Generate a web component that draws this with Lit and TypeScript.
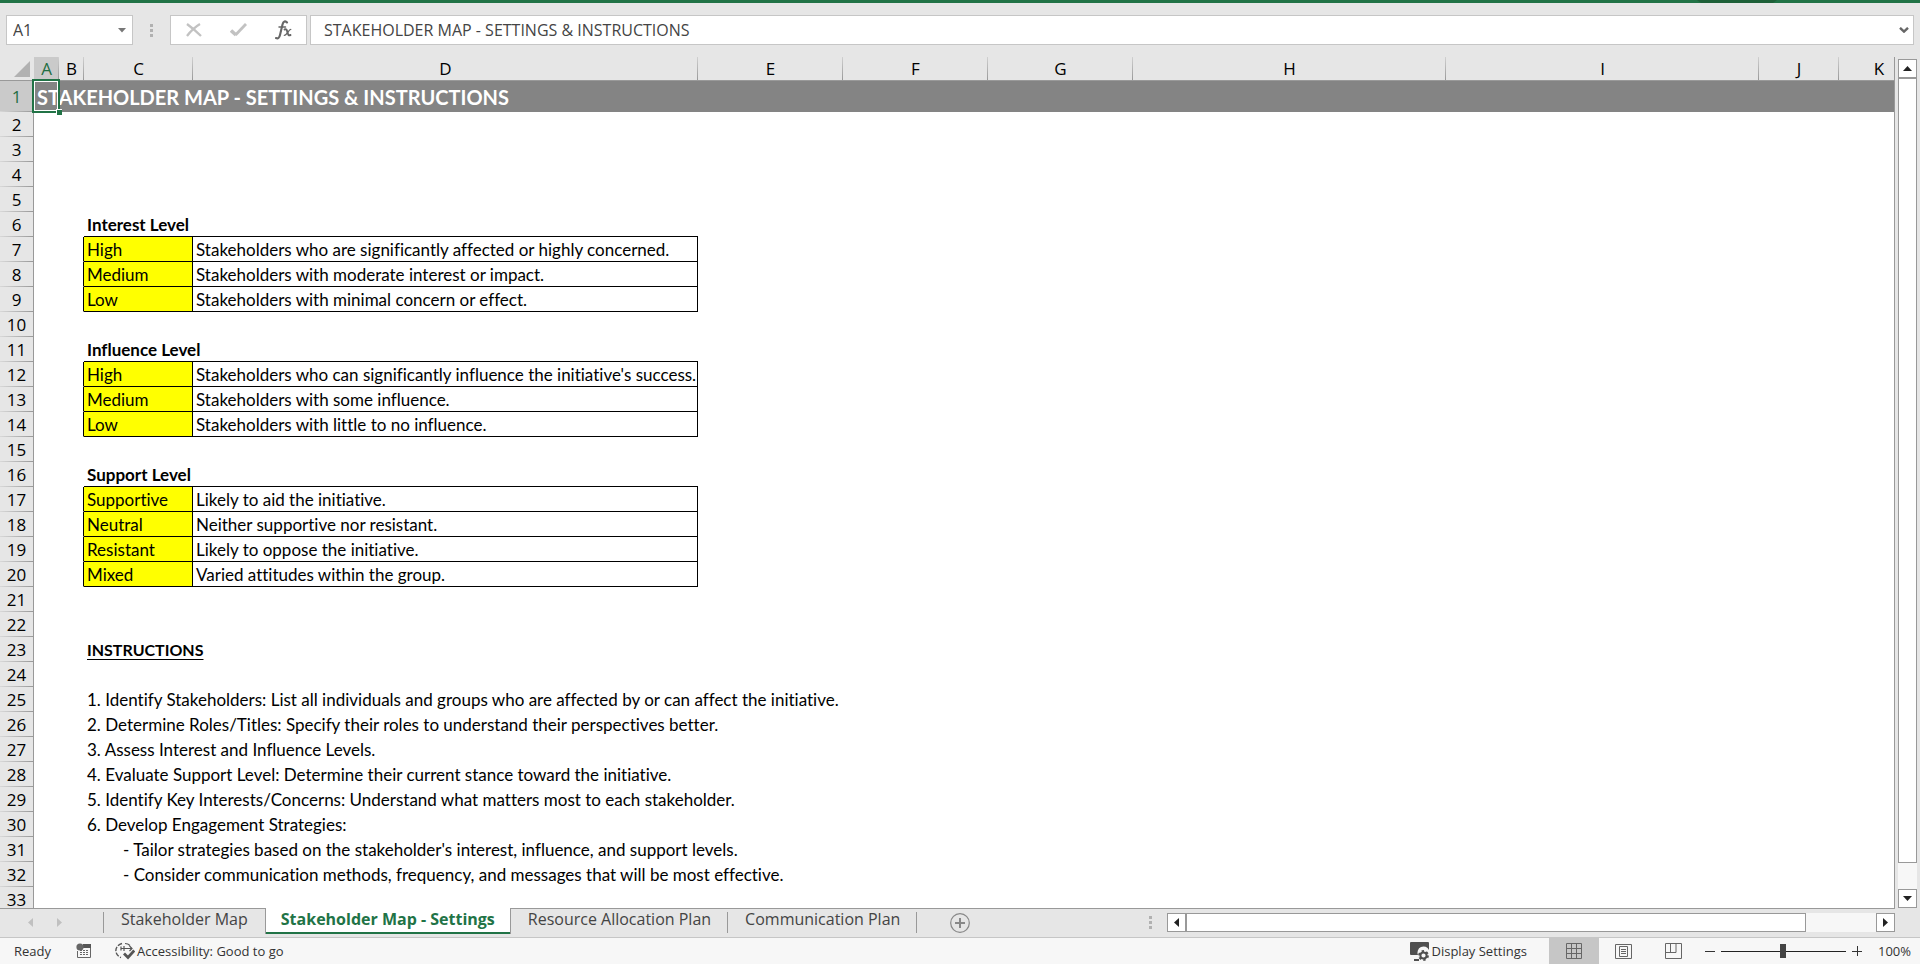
import { LitElement, html, css, nothing } from "lit";
import { customElement, property, state } from "lit/decorators.js";
import { classMap } from "lit/directives/class-map.js";

const COLUMNS = ["A", "B", "C", "D", "E", "F", "G", "H", "I", "J", "K"];
const ROW_COUNT = 33;

interface Level {
  row: number;
  name: string;
  text: string;
}

const HEADINGS: Record<number, string> = {
  6: "Interest Level",
  11: "Influence Level",
  16: "Support Level",
  23: "INSTRUCTIONS",
};

const LEVELS: Level[] = [
  { row: 7, name: "High", text: "Stakeholders who are significantly affected or highly concerned." },
  { row: 8, name: "Medium", text: "Stakeholders with moderate interest or impact." },
  { row: 9, name: "Low", text: "Stakeholders with minimal concern or effect." },
  { row: 12, name: "High", text: "Stakeholders who can significantly influence the initiative's success." },
  { row: 13, name: "Medium", text: "Stakeholders with some influence." },
  { row: 14, name: "Low", text: "Stakeholders with little to no influence." },
  { row: 17, name: "Supportive", text: "Likely to aid the initiative." },
  { row: 18, name: "Neutral", text: "Neither supportive nor resistant." },
  { row: 19, name: "Resistant", text: "Likely to oppose the initiative." },
  { row: 20, name: "Mixed", text: "Varied attitudes within the group." },
];

const NOTES: Record<number, string> = {
  25: "1. Identify Stakeholders: List all individuals and groups who are affected by or can affect the initiative.",
  26: "2. Determine Roles/Titles: Specify their roles to understand their perspectives better.",
  27: "3. Assess Interest and Influence Levels.",
  28: "4. Evaluate Support Level: Determine their current stance toward the initiative.",
  29: "5. Identify Key Interests/Concerns: Understand what matters most to each stakeholder.",
  30: "6. Develop Engagement Strategies:",
  31: "- Tailor strategies based on the stakeholder's interest, influence, and support levels.",
  32: "- Consider communication methods, frequency, and messages that will be most effective.",
};

const TITLE = "STAKEHOLDER MAP - SETTINGS & INSTRUCTIONS";

const base = css`
  :host,
  * {
    box-sizing: border-box;
  }
  button {
    display: flex;
    align-items: center;
    justify-content: center;
    margin: 0;
    padding: 0;
    border: 0;
    background: none;
    font: inherit;
    color: inherit;
  }
  svg {
    display: block;
    flex: none;
  }
`;

@customElement("formula-bar")
export class FormulaBar extends LitElement {
  static styles = [
    base,
    css`
      :host {
        display: flex;
        height: 30px;
        margin: 12px 6px 12px 6px;
        font-size: 16px;
        color: #444;
      }
      .box {
        display: flex;
        align-items: center;
        background: #fff;
        border: 1px solid #c6c6c6;
      }
      .name {
        width: 127px;
      }
      input {
        flex: 1;
        min-width: 0;
        height: 100%;
        border: 0;
        padding: 0;
        outline: 0;
        background: none;
        font: inherit;
        color: inherit;
      }
      .name input {
        padding-left: 6px;
      }
      .name button {
        width: 20px;
        height: 100%;
      }
      .grip {
        width: 37px;
        display: flex;
        align-items: center;
        justify-content: center;
      }
      .tools {
        width: 137px;
      }
      .tools button {
        flex: 1;
        height: 100%;
      }
      .formula {
        flex: 1;
        margin-left: 3px;
      }
      .formula input {
        padding-left: 13px;
      }
      .formula button {
        width: 19px;
        height: 100%;
      }
    `,
  ];

  render() {
    return html`
      <div class="box name">
        <input aria-label="Name Box" value="A1" />
        <button aria-label="Named ranges">
          <svg width="8" height="5"><path d="M0 0h8L4 4.5z" fill="#777" /></svg>
        </button>
      </div>
      <div class="grip">
        <svg width="3" height="13" fill="#b1b1b1"><path d="M0 0h3v3H0zM0 5h3v3H0zM0 10h3v3H0z" /></svg>
      </div>
      <div class="box tools">
        <button aria-label="Cancel">
          <svg width="16" height="14" fill="none" stroke="#c2c2c2" stroke-width="2.300"><path d="M1 1C5 4 11 9 15 13M14 1C9 4 4 9 1 13" /></svg>
        </button>
        <button aria-label="Enter">
          <svg width="17" height="14" fill="none" stroke="#c2c2c2"><path d="M1 7.500L6 12" stroke-width="3.600" /><path d="M5.500 12L16 1" stroke-width="2.800" /></svg>
        </button>
        <button aria-label="Insert Function">
          <svg width="17" height="20" fill="none" stroke="#666" stroke-linecap="round">
            <path d="M12 2.500C10.500 .5 8.300 1 7.500 4.500L5 15C4.300 18 3 19 1 18" stroke-width="2.100" />
            <path d="M4 7h6.500" stroke-width="1.500" />
            <path d="M9.500 9.500c2-.8 2.300.5 3 3s1 3.300 3 2.500" stroke-width="1.900" />
            <path d="M15.800 9.300c-2 0-4 6-6.500 6" stroke-width="1.300" />
          </svg>
        </button>
      </div>
      <div class="box formula">
        <input aria-label="Formula Bar" .value=${TITLE} />
        <button aria-label="Expand Formula Bar">
          <svg width="10" height="6" fill="none" stroke="#666" stroke-width="2.400"><path d="M1 .8l4 3.800L9 .8" /></svg>
        </button>
      </div>
    `;
  }
}

@customElement("sheet-grid")
export class SheetGrid extends LitElement {
  static styles = [
    base,
    css`
      :host {
        display: block;
        overflow: hidden;
        border-right: 1px solid #999;
        background: #fff;
        color: #000;
      }
      table {
        table-layout: fixed;
        width: 1919px;
        border-collapse: separate;
        border-spacing: 0;
      }
      .w-head { width: 34px; }
      .w-A, .w-B { width: 25px; }
      .w-C { width: 109px; }
      .w-D { width: 505px; }
      .w-E, .w-F, .w-G { width: 145px; }
      .w-H, .w-I { width: 313px; }
      .w-J, .w-K { width: 80px; }
      th {
        padding: 0;
        font-weight: 400;
        font-size: 17px;
        line-height: 23px;
        background: #e6e6e6;
        text-align: center;
      }
      thead th {
        height: 24px;
        border-bottom: 1px solid #999;
        background: linear-gradient(#d0d0d0, #999) right / 1px 100% no-repeat #e6e6e6;
      }
      thead .active {
        background-color: #cacaca;
        color: #1f6e43;
      }
      thead .corner {
        background: #e6e6e6;
      }
      .corner svg {
        margin-left: 14px;
      }
      tbody th {
        border-right: 1px solid #999;
        background: linear-gradient(to right, #d8d8d8, #999) bottom / 100% 1px no-repeat #e6e6e6;
      }
      tbody .active {
        background-color: #cacaca;
        color: #1f6e43;
      }
      tr {
        height: 25px;
      }
      thead tr {
        height: 24px;
      }
      .title-row {
        height: 31px;
      }
      td {
        padding: 2px 0 0 3px;
        border-bottom: 1px solid transparent;
        font-family: Lato, "Liberation Sans", sans-serif;
        font-size: 17px;
        font-variant-ligatures: none;
        line-height: 22px;
        white-space: nowrap;
      }
      .title-row td {
        padding: 0 0 0 3px;
        border-bottom: 0;
        background: #848484;
        font-size: 20px;
        line-height: 30px;
        font-weight: 700;
        color: #fff;
      }
      .title-row td.selected {
        position: relative;
      }
      .cursor {
        position: absolute;
        inset: -2px -1px -1px -2px;
        border: 2px solid #217346;
        outline: 1px solid #fff;
        outline-offset: -3px;
      }
      .handle {
        position: absolute;
        right: -3px;
        bottom: -3px;
        width: 6px;
        height: 6px;
        background: #217346;
        border-top: 1px solid #fff;
        border-left: 1px solid #fff;
      }
      .edge-right {
        border-right: 1px solid #000;
      }
      .edge-bottom {
        border-bottom: 1px solid #000;
      }
      .level {
        background: #ff0;
      }
      .heading {
        font-weight: 700;
      }
      .underline {
        font-size: 16px;
        text-decoration: underline;
        text-underline-offset: 3px;
      }
      .indent {
        padding-left: 39px;
      }
    `,
  ];

  private renderRow(row: number) {
    if (row === 1) {
      return html`<tr class="title-row">
        <th scope="row" class="active">1</th>
        <td class="selected">${TITLE}<span class="cursor"></span><span class="handle"></span></td>
        <td colspan="10"></td>
      </tr>`;
    }
    const level = LEVELS.find((l) => l.row === row);
    if (level) {
      return html`<tr>
        <th scope="row">${row}</th>
        <td></td>
        <td class="edge-right"></td>
        <td class="level edge-right edge-bottom">${level.name}</td>
        <td class="edge-right edge-bottom">${level.text}</td>
        <td colspan="7"></td>
      </tr>`;
    }
    const beforeTable = LEVELS.some((l) => l.row === row + 1);
    const text = HEADINGS[row] ?? NOTES[row];
    return html`<tr>
      <th scope="row">${row}</th>
      <td></td>
      <td></td>
      <td class=${classMap({
        heading: row in HEADINGS,
        "edge-bottom": beforeTable,
        indent: row > 30,
      })}>${text ? html`<span class=${row === 23 ? "underline" : ""}>${text}</span>` : nothing}</td>
      <td class=${classMap({ "edge-bottom": beforeTable })}></td>
      <td colspan="7"></td>
    </tr>`;
  }

  render() {
    return html`<table>
      <colgroup>
        <col class="w-head" />
        ${COLUMNS.map((c) => html`<col class="w-${c}" />`)}
      </colgroup>
      <thead>
        <tr>
          <th class="corner"><svg width="16" height="16"><path d="M16 0v16H0z" fill="#b1b1b1" /></svg></th>
          ${COLUMNS.map((c) => html`<th scope="col" class=${c === "A" ? "active" : ""}>${c}</th>`)}
        </tr>
      </thead>
      <tbody>
        ${Array.from({ length: ROW_COUNT }, (_, i) => this.renderRow(i + 1))}
      </tbody>
    </table>`;
  }
}

@customElement("scroll-bar")
export class ScrollBar extends LitElement {
  @property({ type: Boolean, reflect: true }) vertical = false;

  static styles = [
    base,
    css`
      :host {
        display: flex;
        background: #f7f7f7;
      }
      :host([vertical]) {
        flex-direction: column;
      }
      button {
        width: 19px;
        height: 19px;
        flex: none;
        background: #fff;
        border: 1px solid #999;
      }
      .thumb {
        flex: 620;
        background: #fff;
        border: 1px solid #999;
      }
      .rest {
        flex: 70;
      }
      :host([vertical]) .thumb {
        flex: 785;
      }
      :host([vertical]) .rest {
        flex: 26;
      }
    `,
  ];

  render() {
    const [back, forward] = this.vertical
      ? ["M0 7L4.500 2 9 7z", "M0 2l4.500 5L9 2z"]
      : ["M7 0L2 4.500 7 9z", "M2 0l5 4.500L2 9z"];
    return html`
      <button aria-label="Scroll back"><svg width="9" height="9"><path d=${back} fill="#222" /></svg></button>
      <div class="thumb"></div>
      <div class="rest"></div>
      <button aria-label="Scroll forward"><svg width="9" height="9"><path d=${forward} fill="#222" /></svg></button>
    `;
  }
}

@customElement("sheet-tabs")
export class SheetTabs extends LitElement {
  @state() private current = 1;

  private readonly tabs = ["Stakeholder Map", "Stakeholder Map - Settings", "Resource Allocation Plan", "Communication Plan"];

  static styles = [
    base,
    css`
      :host {
        display: flex;
        height: 30px;
        padding-right: 25px;
        background: #e6e6e6;
        border-bottom: 1px solid #c6c6c6;
        font-size: 16px;
        color: #444;
      }
      .strip {
        flex: 1;
        display: flex;
        border-top: 1px solid #999;
      }
      .arrows {
        display: flex;
        align-items: center;
        gap: 24px;
        width: 104px;
        height: 21px;
        padding-left: 28px;
        border-right: 1px solid #999;
        margin-top: 3px;
      }
      nav {
        display: flex;
      }
      .tab {
        height: 25px;
        padding: 0 17px;
        line-height: 20px;
        align-items: flex-start;
        white-space: nowrap;
      }
      .tab.line {
        position: relative;
      }
      .tab.line::after {
        content: "";
        position: absolute;
        right: 0;
        top: 3px;
        width: 1px;
        height: 21px;
        background: #999;
      }
      .tab.current {
        margin-top: -1px;
        height: 26px;
        padding: 1px 15px 0;
        background: #fff;
        border: solid #999;
        border-width: 0 1px;
        box-shadow: inset 0 -2px #217346;
        font-weight: 700;
        color: #217346;
      }
      .add {
        margin-left: 33px;
      }
      .grip {
        margin: 7px 15px 0 auto;
      }
      scroll-bar {
        width: 38.4%;
        height: 19px;
        margin-top: 4px;
      }
    `,
  ];

  render() {
    return html`
      <div class="strip">
        <div class="arrows">
          <button aria-label="Previous sheet"><svg width="5" height="9"><path d="M5 0v9L0 4.500z" fill="#c0c0c0" /></svg></button>
          <button aria-label="Next sheet"><svg width="5" height="9"><path d="M0 0v9l5-4.500z" fill="#c0c0c0" /></svg></button>
        </div>
        <nav aria-label="Sheets">
          ${this.tabs.map(
            (t, i) => html`<button
              class=${classMap({ tab: true, current: i === this.current, line: i > this.current })}
              @click=${() => (this.current = i)}
            >${t}</button>`,
          )}
        </nav>
        <button class="add" aria-label="New sheet">
          <svg width="20" height="20" fill="none" stroke="#888"><circle cx="10" cy="10" r="9.300" stroke-width="1.200" /><path d="M5 10h10M10 5v10" stroke-width="2" /></svg>
        </button>
        <svg class="grip" width="3" height="13" fill="#b1b1b1"><path d="M0 0h3v3H0zM0 5h3v3H0zM0 10h3v3H0z" /></svg>
        <scroll-bar></scroll-bar>
      </div>
    `;
  }
}

@customElement("status-bar")
export class StatusBar extends LitElement {
  static styles = [
    base,
    css`
      :host {
        display: flex;
        align-items: center;
        height: 26px;
        padding: 0 9px 0 14px;
        background: #f7f7f7;
        font-size: 13px;
        color: #333;
      }
      .macro {
        margin-left: 25px;
      }
      .access {
        margin-left: 23px;
        gap: 2px;
      }
      .display {
        margin-left: auto;
        gap: 2px;
      }
      .views {
        display: flex;
        align-self: stretch;
        margin-left: 22px;
      }
      .views button {
        width: 50px;
      }
      .views .on {
        background: #c6c6c6;
      }
      .zoom {
        display: flex;
        align-items: center;
        margin-left: 6px;
        gap: 6px;
      }
      input {
        appearance: none;
        width: 125px;
        height: 14px;
        margin: 0;
        background: linear-gradient(#222, #222) center / 100% 1px no-repeat;
      }
      input::-webkit-slider-thumb {
        appearance: none;
        width: 6px;
        height: 14px;
        background: #444;
      }
      .percent {
        margin-left: 16px;
      }
    `,
  ];

  render() {
    return html`
      <span>Ready</span>
      <button class="macro" aria-label="Record Macro">
        <svg width="16" height="16">
          <path d="M7 1h8v4H7z" fill="#555" /><circle cx="4" cy="4" r="3.600" fill="#666" />
          <path d="M1.500 8v6.500h13V5" fill="none" stroke="#666" />
          <path d="M4 7.500h9M4 9.500h9M4 11.500h9" stroke="#666" stroke-dasharray="2 1" />
        </svg>
      </button>
      <button class="access">
        <svg width="20" height="18" fill="none" stroke="#555">
          <path d="M7 1.500C-1 3.500-1 13 6 15.500" stroke-width="1.400" stroke-dasharray="4.500 1.500" />
          <path d="M6 6.500h11M9 4v5M14.500 4L17 6.500 14.500 9M10 1.500c2 0 3.500.5 5 2M6 4.500v4" stroke-width="1.200" />
          <path d="M9 11.500l4 4 6.300-7" stroke-width="2.800" />
        </svg>
        Accessibility: Good to go
      </button>
      <button class="display">
        <svg width="19" height="19">
          <path d="M1 0h17a1 1 0 0 1 1 1v7a6 6 0 0 0-11 5H1a1 1 0 0 1-1-1V1a1 1 0 0 1 1-1zM4 17h5v2H4z" fill="#505050" />
          <circle cx="13.500" cy="13.500" r="3.100" fill="none" stroke="#505050" stroke-width="2" />
          <circle cx="13.500" cy="13.500" r="4.500" fill="none" stroke="#505050" stroke-width="1.800" stroke-dasharray="2.350 2.350" />
        </svg>
        Display Settings
      </button>
      <div class="views">
        <button class="on" aria-label="Normal">
          <svg width="16" height="16" fill="none" stroke="#666"><path d="M.5.5h15v15H.5zM5.500.5v15M10.500.5v15M.5 5.500h15M.5 10.500h15" /></svg>
        </button>
        <button aria-label="Page Layout">
          <svg width="17" height="15" fill="none" stroke="#666"><path d="M.5.5h16v14H.5zM4.500 2.500h8v10h-8zM6 5.500h5M6 7.500h5M6 9.500h5" /></svg>
        </button>
        <button aria-label="Page Break Preview">
          <svg width="17" height="16" fill="none" stroke="#666"><path d="M.5.5h16v15H.5zM5.500.5v9M.5 9.500h10.500v-9" /></svg>
        </button>
      </div>
      <div class="zoom">
        <button aria-label="Zoom out"><svg width="10" height="10" stroke="#333"><path d="M0 5.500h10" /></svg></button>
        <input type="range" aria-label="Zoom" min="0" max="200" value="100" />
        <button aria-label="Zoom in"><svg width="10" height="10" stroke="#333"><path d="M0 5.500h10M5.500 0v10" /></svg></button>
      </div>
      <span class="percent">100%</span>
    `;
  }
}

@customElement("app-root")
export class AppRoot extends LitElement {
  static styles = [
    base,
    css`
      :host {
        display: flex;
        flex-direction: column;
        height: 100vh;
        padding-bottom: 2px;
        overflow: hidden;
        background: #fff;
        font-family: "Open Sans", "Noto Sans", sans-serif;
      }
      .accent {
        height: 3px;
        background: #217346;
        display: flex;
        justify-content: flex-end;
        padding-right: 143px;
      }
      .window {
        flex: 1;
        min-height: 0;
        display: flex;
        flex-direction: column;
        background: #e6e6e6;
      }
      .work {
        flex: 1;
        min-height: 0;
        display: flex;
        gap: 3px;
        padding-right: 3px;
      }
      sheet-grid {
        flex: 1;
        min-width: 0;
      }
      .work scroll-bar {
        margin-top: 2px;
      }
    `,
  ];

  render() {
    return html`
      <div class="accent"><svg width="80" height="3"><path d="M0 0h80l-4 3H4z" fill="#1e6038" /></svg></div>
      <div class="window">
        <formula-bar></formula-bar>
        <div class="work">
          <sheet-grid></sheet-grid>
          <scroll-bar vertical></scroll-bar>
        </div>
        <sheet-tabs></sheet-tabs>
        <status-bar></status-bar>
      </div>
    `;
  }
}
